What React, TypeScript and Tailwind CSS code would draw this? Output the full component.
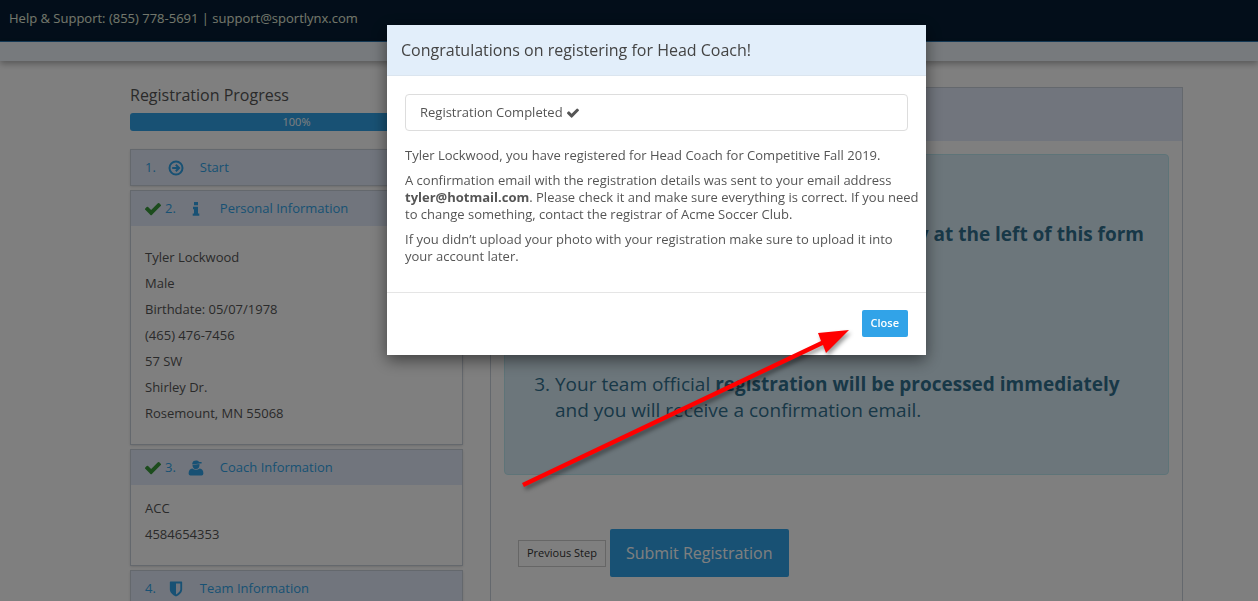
import React, { useState } from "react";

type IconProps = { className?: string };

const CheckIcon = ({ className }: IconProps) => (
  <svg viewBox="121 190 1550 1450" fill="currentColor" className={className} aria-hidden="true">
    <path d="M1671 566q0 40-28 68l-724 724-136 136q-28 28-68 28t-68-28l-136-136-362-362q-28-28-28-68t28-68l136-136q28-28 68-28t68 28l294 295 656-657q28-28 68-28t68 28l136 136q28 28 28 68z" />
  </svg>
);

const ArrowIcon = ({ className }: IconProps) => (
  <svg viewBox="0 0 16 16" fill="none" stroke="currentColor" className={className} aria-hidden="true">
    <circle cx="8" cy="8" r="6.5" strokeWidth="2" />
    <path d="M4.2 8h6.4M7.8 4.7 11.1 8l-3.3 3.3" strokeWidth="2" />
  </svg>
);

const InfoIcon = ({ className }: IconProps) => (
  <svg viewBox="0 0 16 16" fill="currentColor" className={className} aria-hidden="true">
    <path d="M6 1h4v3.2H6zM5 5.8h5v6.6h1.3v2.4H4.7v-2.4H6V8.2H5z" />
  </svg>
);

const CoachIcon = ({ className }: IconProps) => (
  <svg viewBox="0 0 16 16" fill="currentColor" className={className} aria-hidden="true">
    <path d="M4.3 2.9Q5 .6 8 .6c1.6 0 2.7.6 3.3 1.5h2.3v1.3h-2L4.3 4.4z" />
    <path d="M4.5 4.9 11.5 4q.3 5-3.5 5.1-3.4-.1-3.5-4.2z" />
    <path d="M4.3 8.4Q8 11 11.7 8.4 15.4 8.9 15.4 13.5q0 1.9-1.8 1.9H2.4Q.6 15.4.6 13.5q0-4.6 3.7-5.1z" />
  </svg>
);

const ShieldIcon = ({ className }: IconProps) => (
  <svg viewBox="64 64 1664 1664" fill="currentColor" className={className} aria-hidden="true">
    <path d="M1344 960V320H896v1137q119-63 213-137 235-184 235-360zm192-768v768q0 86-33.5 170.5t-83 150-118 127.5-126.5 103-121 77.5-89.5 49.5-42.5 20q-12 6-26 6t-26-6q-16-7-42.5-20t-89.5-49.5-121-77.5-126.5-103-118-127.5-83-150T256 960V192q0-26 19-45t45-19h1152q26 0 45 19t19 45z" />
  </svg>
);

const STEPS = [
  { label: 'Start', icon: ArrowIcon, done: false, spacing: '', details: [] },
  {
    label: 'Personal Information',
    icon: InfoIcon,
    done: true,
    spacing: 'pt-[18px]',
    details: ['Tyler Lockwood', 'Male', 'Birthdate: 05/07/1978', '(465) 476-7456', '57 SW', 'Shirley Dr.', 'Rosemount, MN 55068'],
  },
  { label: 'Coach Information', icon: CoachIcon, done: true, spacing: 'pt-[10px]', details: ['ACC', '4584654353'] },
  { label: 'Team Information', icon: ShieldIcon, done: false, spacing: '', details: [] },
];

const StepCard = ({ step, number }: { step: (typeof STEPS)[number]; number: number }) => {
  const Icon = step.icon;
  return (
    <section className="border border-[#c9d0da] shadow-sm">
      <a href="#" className="flex h-[35px] items-center bg-[#e2ebfa] px-[14px] text-[#31a3e8]">
        {step.done && <CheckIcon className="mr-1 size-4 text-[#38983a]" />}
        <span>{number}.</span>
        <Icon className="ml-3 size-4" />
        <span className="ml-4">{step.label}</span>
      </a>
      {step.details.length > 0 && (
        <ul className={`px-[14px] pb-[18px] leading-[26px] ${step.spacing}`}>
          {step.details.map(line => (
            <li key={line}>{line}</li>
          ))}
        </ul>
      )}
    </section>
  );
};

const Modal = ({ onClose }: { onClose: () => void }) => (
  <div className="fixed inset-0 z-20 overflow-hidden bg-black/50 pt-[25px] pl-[55px]">
    <div
      role="dialog"
      aria-modal="true"
      aria-labelledby="modal-title"
      className="mx-auto w-full max-w-[539px] bg-white shadow-[0_5px_15px_rgba(0,0,0,0.5)]"
    >
      <div className="border-b border-[#dbe5ef] bg-[#e2eefa] px-[14px] py-3">
        <h2 id="modal-title" className="text-base leading-[26px] text-[#444]">Congratulations on registering for Head Coach!</h2>
      </div>
      <div className="pt-[18px] pb-[27px] leading-[17px]">
        <div className="mx-[18px] mb-4 flex h-[37px] items-center gap-1 rounded border border-[#ddd] px-[14px]">
          Registration Completed
          <CheckIcon className="size-3" />
        </div>
        <div className="flex flex-col gap-2 pr-[3px] pl-[18px]">
          <p>Tyler Lockwood, you have registered for Head Coach for Competitive Fall 2019.</p>
          <p>
            A confirmation email with the registration details was sent to your email address{' '}
            <strong>tyler@hotmail.com</strong>. Please check it and make sure everything is correct. If you need
            <br />
            to change something, contact the registrar of Acme Soccer Club.
          </p>
          <p>
            If you didn’t upload your photo with your registration make sure to upload it into
            <br />
            your account later.
          </p>
        </div>
      </div>
      <div className="flex justify-end border-t border-[#e5e5e5] px-[18px] pt-[17px] pb-[18px]">
        <button onClick={onClose} className="h-[27px] rounded-xs bg-[#31a3e8] px-[9px] text-[11px] font-semibold text-white">
          Close
        </button>
      </div>
    </div>
  </div>
);

// Red pointer towards the Close button
const Pointer = () => (
  <svg
    viewBox="0 0 340 170"
    className="pointer-events-none absolute top-[325px] left-[515px] z-30 w-[340px] drop-shadow-[2px_3px_2px_rgba(0,0,0,0.4)]"
    aria-hidden="true"
  >
    <path d="M7 158 306 16 303 8 334 5 311 28 308 20 9 162z" fill="#ff0000" />
  </svg>
);

export default function App() {
  const [modalOpen, setModalOpen] = useState(true);

  return (
    <div className="relative h-screen overflow-hidden bg-white font-['Open_Sans',sans-serif] text-[13px] text-[#555]">
      <header>
        <div className="flex h-[42px] items-center border-b border-[#2a76b0] bg-[#061d34] px-[9px] pb-[3px] text-[#e6efda]">
          Help &amp; Support: (855) 778-5691 | support@sportlynx.com
        </div>
        <div className="h-[19px] bg-[#eef5fa] shadow-[0_3px_6px_rgba(0,0,0,0.3)]" />
      </header>

      <div className="pl-[55px]">
        <main className="mx-auto grid max-w-[1053px] grid-cols-[333fr_693fr] gap-[27px] pt-[26px]">
          <aside className="-mt-1">
            <h1 className="text-base leading-6 text-[#555]">Registration Progress</h1>
            <div
              role="progressbar"
              aria-valuenow={100}
              className="mt-[6px] mb-[18px] h-[18px] rounded-[3px] bg-[#31a3e8] text-center text-[11px] leading-[18px] text-white"
            >
              100%
            </div>
            <div className="flex flex-col gap-1">
              {STEPS.map((step, i) => (
                <StepCard key={step.label} step={step} number={i + 1} />
              ))}
            </div>
          </aside>

          <section className="min-h-[560px] border border-[#c9d0da]">
            <div className="h-[53px] bg-[#e2ebfa]" />
            <div className="p-[13px]">
              <div className="rounded border border-[#bce8f1] bg-[#d9edf7] pt-[66px] pr-6 pb-[51px] pl-[29px] text-[19px] leading-[26px] text-[#31708f]">
                <p className="mb-[124px] text-right font-bold">Review the summary at the left of this form</p>
                <ol start={3} className="list-decimal pl-[21px]">
                  <li>
                    Your team official <strong>registration will be processed immediately</strong> and you will receive a
                    confirmation email.
                  </li>
                </ol>
              </div>
              <div className="mt-[54px] flex items-center gap-1 px-[14px]">
                <button className="h-[27px] border border-[#ccc] bg-white px-2 text-[11px] text-[#333]">Previous Step</button>
                <button className="h-12 rounded-xs bg-[#31a3e8] px-4 text-base text-white">Submit Registration</button>
              </div>
            </div>
          </section>
        </main>
      </div>

      {modalOpen && <Modal onClose={() => setModalOpen(false)} />}
      {modalOpen && <Pointer />}
    </div>
  );
}
